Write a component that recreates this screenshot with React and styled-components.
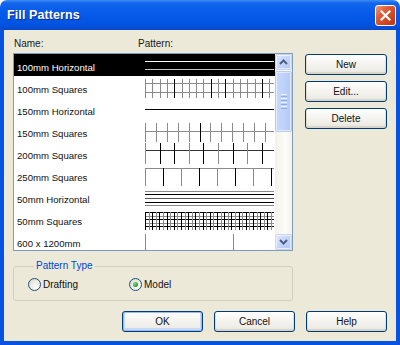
import React from 'react';
import styled, { createGlobalStyle } from 'styled-components';

const Global = createGlobalStyle`
  html, body { margin: 0; padding: 0; background: #ffffff; }
  body { font-family: "Liberation Sans", Arial, sans-serif; }
  * { box-sizing: border-box; }
`;

const Window = styled.div`
  width: 400px;
  height: 345px;
  display: flex;
  flex-direction: column;
`;

const TitleBar = styled.div`
  height: 30px;
  flex: none;
  display: flex;
  align-items: center;
  justify-content: space-between;
  padding: 0 4px 0 7px;
  border-radius: 7px 7px 0 0;
  background: linear-gradient(
    to bottom,
    #3d8ef5 0%,
    #1466ec 10%,
    #0a5eea 30%,
    #0458e6 60%,
    #0252df 85%,
    #0847c8 100%
  );
`;

const Title = styled.span`
  color: #ffffff;
  font-weight: bold;
  font-size: 12.5px;
  letter-spacing: 0.1px;
  text-shadow: 1px 1px 0 #0b2a8c;
`;

const CloseButton = styled.div`
  width: 21px;
  height: 21px;
  border: 1px solid #ffffff;
  border-radius: 3px;
  background: linear-gradient(135deg, #ef9a7c 0%, #df5d36 35%, #cf4420 70%, #b8361a 100%);
  display: flex;
  align-items: center;
  justify-content: center;
`;

const Body = styled.div`
  flex: 1;
  background: #ece9d8;
  border: 4px solid #0553e0;
  border-top: none;
  padding: 8px 9px 9px 9px;
  display: flex;
  flex-direction: column;
`;

const MainGrid = styled.div`
  display: grid;
  grid-template-columns: 280px 82px;
  grid-template-rows: 12px 198px;
  column-gap: 12px;
  row-gap: 3px;
`;

const Header = styled.div`
  display: flex;
  font-size: 10px;
  line-height: 12px;
  color: #1a1a1a;
  padding-left: 1px;
`;

const HeaderLabel = styled.span`
  width: ${(p) => p.$w}px;
`;

const ListBox = styled.div`
  grid-row: 2;
  grid-column: 1;
  border: 1px solid #7f9db9;
  background: #ffffff;
  display: flex;
  height: 198px;
  overflow: hidden;
`;

const Rows = styled.div`
  flex: 1;
  overflow: hidden;
`;

const Row = styled.div`
  display: flex;
  height: 22px;
  background: ${(p) => (p.$selected ? '#000000' : 'transparent')};
  color: ${(p) => (p.$selected ? '#ffffff' : '#111111')};
`;

const NameCell = styled.div`
  width: 131px;
  flex: none;
  padding: 8px 0 0 3px;
  font-size: 9.6px;
  line-height: 12px;
  white-space: nowrap;
`;

const PatternCell = styled.svg`
  display: block;
  flex: none;
`;

const ScrollBar = styled.div`
  width: 17px;
  flex: none;
  display: flex;
  flex-direction: column;
  background: linear-gradient(to right, #f3f1ea, #fdfdfa 60%, #f3f1ea);
`;

const ScrollBtn = styled.div`
  height: 16px;
  flex: none;
  border: 1px solid #c6d5f7;
  border-radius: 2px;
  background: linear-gradient(135deg, #dde7fd 0%, #c4d5fb 50%, #b4c8f6 100%);
  display: flex;
  align-items: center;
  justify-content: center;
  box-shadow: inset 0 0 0 1px rgba(255, 255, 255, 0.6);
`;

const Thumb = styled.div`
  height: 61px;
  flex: none;
  margin-top: 1px;
  border: 1px solid #b8cbf5;
  border-radius: 2px;
  background: linear-gradient(to right, #c9d9fc 0%, #bfd2fb 50%, #b3c8f6 100%);
  box-shadow: inset 0 0 0 1px rgba(255, 255, 255, 0.55);
  display: flex;
  flex-direction: column;
  align-items: center;
  justify-content: center;
  gap: 1px;
`;

const Grip = styled.span`
  width: 6px;
  height: 1px;
  background: ${(p) => (p.$dark ? '#8cadf0' : '#eef4fe')};
`;

const Track = styled.div`
  flex: 1;
`;

const SideButtons = styled.div`
  grid-row: 2;
  grid-column: 2;
  display: flex;
  flex-direction: column;
  gap: 6px;
  padding-top: 1px;
`;

const Button = styled.div`
  width: ${(p) => (p.$w ? `${p.$w}px` : '100%')};
  height: 21px;
  flex: none;
  border: 1px solid #003c74;
  border-radius: 3px;
  background: linear-gradient(to bottom, #ffffff 0%, #f6f5f1 40%, #ecebe5 85%, #d8d3c6 100%);
  box-shadow: ${(p) =>
    p.$default
      ? 'inset 0 0 0 1px #9bbcf3, inset 0 -1px 0 2px #c7d8f9'
      : 'inset 0 -1px 0 1px rgba(214, 208, 197, 0.6)'};
  display: flex;
  align-items: center;
  justify-content: center;
  font-size: 10px;
  color: #111111;
`;

const Group = styled.fieldset`
  margin: 9px 0 0 0;
  width: 280px;
  min-width: 0;
  padding: 0 0 9px 14px;
  border: 1px solid #d0d0bf;
  border-radius: 3px;
`;

const Legend = styled.legend`
  color: #0046d5;
  font-size: 10px;
  line-height: 12px;
  padding: 0 2px;
  margin-left: 6px;
`;

const RadioRow = styled.div`
  display: flex;
  align-items: center;
  margin-top: 6px;
  height: 13px;
`;

const RadioItem = styled.label`
  display: flex;
  align-items: center;
  gap: 2px;
  width: ${(p) => p.$w}px;
  font-size: 10px;
  color: #111111;
`;

const RadioCircle = styled.span`
  width: 13px;
  height: 13px;
  flex: none;
  border-radius: 50%;
  border: 1px solid #1c5180;
  background: radial-gradient(circle at 70% 70%, #ffffff 0%, #ebe9e1 55%, #d3d0c3 100%);
  display: flex;
  align-items: center;
  justify-content: center;
`;

const RadioDot = styled.span`
  width: 5px;
  height: 5px;
  border-radius: 50%;
  background: radial-gradient(circle at 35% 35%, #7fe07f 0%, #2aa52a 60%, #1a871a 100%);
`;

const BottomRow = styled.div`
  margin-top: auto;
  display: flex;
  justify-content: flex-end;
  gap: 11px;
`;

/* ---------- pattern drawings ---------- */
const PW = 129;
const PH = 22;
const G = '#8a8a8a';
const K = '#000000';

const h = (y, c, x1 = 0, x2 = PW) => ({ x1, y1: y, x2, y2: y, c });
const v = (x, c, y1, y2) => ({ x1: x, y1, x2: x, y2, c });

const vSeries = (start, step, y1, y2, colorFn) => {
  const out = [];
  for (let i = 0; start + i * step < PW; i++) {
    out.push(v(Math.round(start + i * step) + 0.5, colorFn(i), y1, y2));
  }
  return out;
};

const patterns = [
  [h(7.5, '#ffffff'), h(15.5, '#c4c4c4')],
  [
    h(7.5, G),
    h(16.5, G),
    ...vSeries(0, 7.3, 3, 22, (i) => ([4, 9, 11, 16].includes(i) ? K : G)),
  ],
  [h(11.5, K)],
  [h(11.5, G), ...vSeries(0, 10.9, 3, 22, (i) => (i === 5 ? K : G))],
  [h(8.5, '#333333'), ...vSeries(0, 14.6, 1, 22, (i) => ([1, 2, 4, 6, 8].includes(i) ? K : G))],
  [h(4.5, G), ...vSeries(0, 18, 4, 22, (i) => (i % 2 === 1 ? K : G))],
  [h(5.5, G), h(8.5, K), h(12.5, '#555555'), h(16.5, K), h(19.5, G)],
  (() => {
    const out = [];
    for (let i = 0; i < 6; i++) out.push(h(Math.round(4 + i * 3.6) + 0.5, i % 2 ? G : K));
    out.push(...vSeries(0, 3.6, 4, 23, (i) => (i % 2 ? G : K)));
    return out;
  })(),
  [v(0.5, G, 4, 22), v(88.5, G, 4, 22)],
];

const Pattern = ({ lines }) => (
  <PatternCell width={PW} height={PH} viewBox={`0 0 ${PW} ${PH}`} shapeRendering="crispEdges">
    {lines.map((l, i) => (
      <line key={i} x1={l.x1} y1={l.y1} x2={l.x2} y2={l.y2} stroke={l.c} strokeWidth="1" />
    ))}
  </PatternCell>
);

const names = [
  '100mm Horizontal',
  '100mm Squares',
  '150mm Horizontal',
  '150mm Squares',
  '200mm Squares',
  '250mm Squares',
  '50mm Horizontal',
  '50mm Squares',
  '600 x 1200mm',
];

const Chevron = ({ down }) => (
  <svg width="9" height="6" viewBox="0 0 9 6">
    <polyline
      points={down ? '1,1 4.5,4.5 8,1' : '1,5 4.5,1.5 8,5'}
      fill="none"
      stroke="#4d6185"
      strokeWidth="2"
    />
  </svg>
);

export default function App() {
  return (
    <>
      <Global />
      <Window>
        <TitleBar>
          <Title>Fill Patterns</Title>
          <CloseButton>
            <svg width="11" height="11" viewBox="0 0 11 11">
              <path d="M1.5 1.5 L9.5 9.5 M9.5 1.5 L1.5 9.5" stroke="#ffffff" strokeWidth="2.2" strokeLinecap="square" />
            </svg>
          </CloseButton>
        </TitleBar>
        <Body>
          <MainGrid>
            <Header>
              <HeaderLabel $w={124}>Name:</HeaderLabel>
              <HeaderLabel $w={80}>Pattern:</HeaderLabel>
            </Header>
            <ListBox>
              <Rows>
                {names.map((n, i) => (
                  <Row key={n} $selected={i === 0}>
                    <NameCell>{n}</NameCell>
                    <Pattern lines={patterns[i]} />
                  </Row>
                ))}
              </Rows>
              <ScrollBar>
                <ScrollBtn>
                  <Chevron />
                </ScrollBtn>
                <Thumb>
                  <Grip />
                  <Grip $dark />
                  <Grip />
                  <Grip $dark />
                  <Grip />
                  <Grip $dark />
                  <Grip />
                  <Grip $dark />
                </Thumb>
                <Track />
                <ScrollBtn>
                  <Chevron down />
                </ScrollBtn>
              </ScrollBar>
            </ListBox>
            <SideButtons>
              <Button>New</Button>
              <Button>Edit...</Button>
              <Button>Delete</Button>
            </SideButtons>
          </MainGrid>
          <Group>
            <Legend>Pattern Type</Legend>
            <RadioRow>
              <RadioItem $w={101}>
                <RadioCircle />
                Drafting
              </RadioItem>
              <RadioItem $w={80}>
                <RadioCircle>
                  <RadioDot />
                </RadioCircle>
                Model
              </RadioItem>
            </RadioRow>
          </Group>
          <BottomRow>
            <Button $w={81} $default>OK</Button>
            <Button $w={81}>Cancel</Button>
            <Button $w={81}>Help</Button>
          </BottomRow>
        </Body>
      </Window>
    </>
  );
}
